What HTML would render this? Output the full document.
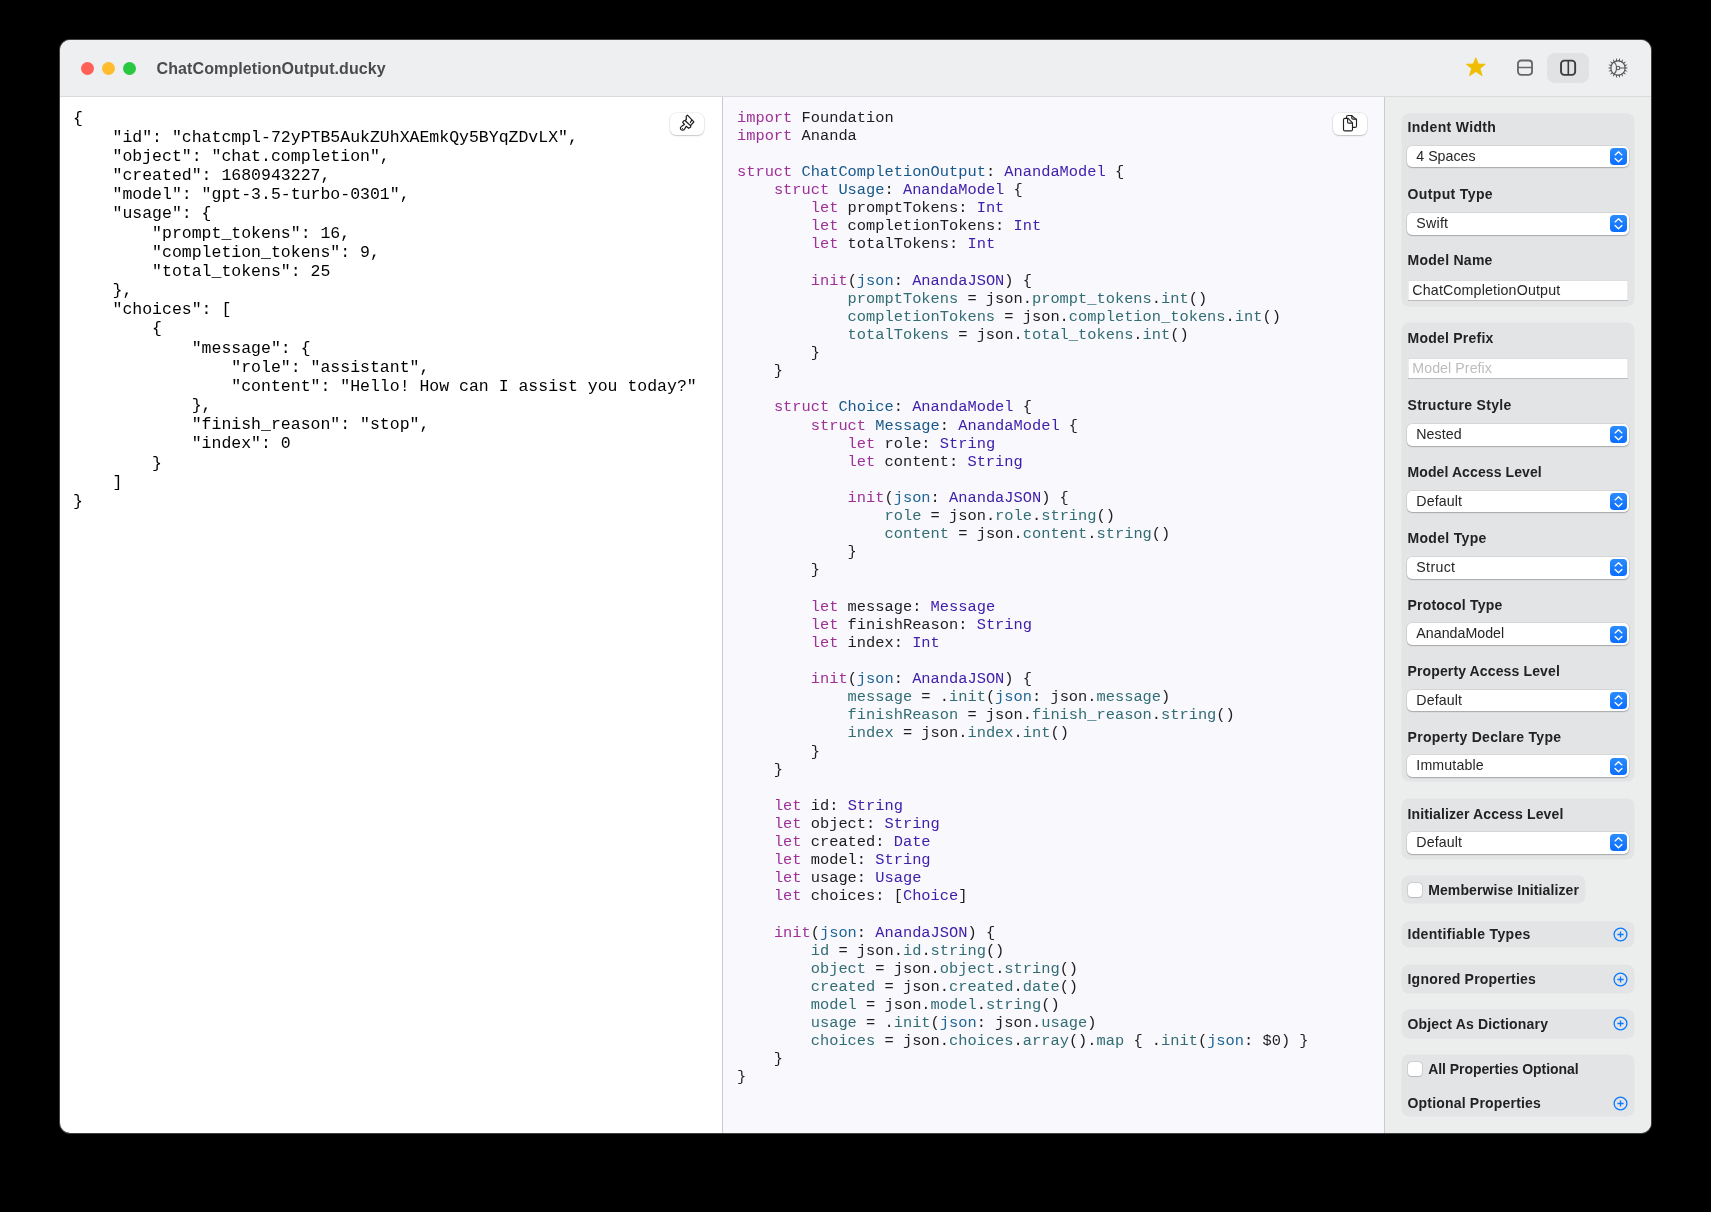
<!DOCTYPE html>
<html>
<head>
<meta charset="utf-8">
<style>
html,body{margin:0;padding:0;}
body{width:1711px;height:1212px;background:#000;position:relative;overflow:hidden;font-family:"Liberation Sans",sans-serif;}
.win{position:absolute;left:60px;top:40px;width:1591px;height:1093px;border-radius:10px;overflow:hidden;background:#fff;}
.ring{position:absolute;left:60px;top:40px;width:1591px;height:1093px;border-radius:10px;box-shadow:0 0 0 1px rgba(128,128,128,0.5);}
.pg{position:absolute;left:-60px;top:-40px;width:1711px;height:1212px;will-change:transform;}
.a{position:absolute;}
.tb{left:60px;top:40px;width:1591px;height:56px;background:#EEEFF1;border-bottom:1px solid #DADBDC;}
.dot{top:61.5px;width:13px;height:13px;border-radius:50%;}
.title{left:156.6px;top:59px;font-size:16px;font-weight:bold;color:#4B4B4B;line-height:20px;white-space:pre;letter-spacing:0.1px;}
.vdiv{top:97px;width:1px;height:1036px;background:#CBCBCD;}
.right{left:723px;top:97px;width:661px;height:1036px;background:#F8F8FD;}
.side{left:1385px;top:97px;width:266px;height:1036px;background:#ECEDED;}
pre{margin:0;font-family:"Liberation Mono",monospace;white-space:pre;}
.json{left:72.9px;top:108.5px;font-size:16.5px;line-height:19.17px;color:#000;}
.code{left:737px;top:108.7px;font-size:15.37px;line-height:18.11px;color:#1E1E1E;}
.k{color:#9E3098}.td{color:#18588A}.ty{color:#4020AA}.pr{color:#326D74}.ar{color:#1F6595}
.btn{width:34px;height:22px;border-radius:6px;background:#fff;box-shadow:0 0 0 0.5px rgba(0,0,0,0.10),0 1px 1.5px rgba(0,0,0,0.18);}
.sel{left:1547px;top:53px;width:42px;height:30px;border-radius:8px;background:#E1E2E4;}
.card{left:1402.4px;width:231px;background:#E3E4E6;border-radius:7px;box-shadow:0 0 0 0.5px rgba(0,0,0,0.04);}
.lbl{left:1408px;font-size:14px;line-height:16px;font-weight:bold;color:#222;white-space:pre;letter-spacing:0px;}
.pop{left:1407px;width:221.6px;height:21.5px;border-radius:5px;background:#fff;box-shadow:0 0 0 0.5px rgba(0,0,0,0.12),0 1px 1.2px rgba(0,0,0,0.22);}
.pop .t{position:absolute;left:9.3px;top:2px;font-size:14.2px;line-height:16px;color:#262626;white-space:pre;}
.step{position:absolute;right:1.6px;top:2.2px;width:17px;height:17px;border-radius:4px;background:linear-gradient(#2B8CFF,#0A6DFF);}
.tf{left:1408px;width:220px;height:21px;background:#fff;box-shadow:inset 0 1px 0 #DEDEDE, inset 0 -1px 0 #BDBDBD, inset 1px 0 0 #EBEBEB, inset -1px 0 0 #EBEBEB;}
.tf .t{position:absolute;left:4.3px;top:2.4px;font-size:14.2px;line-height:16px;color:#262626;white-space:pre;letter-spacing:0.19px;}
.cb{left:1407.7px;width:14px;height:14px;border-radius:3.5px;background:#fff;box-shadow:0 0 0 0.5px rgba(0,0,0,0.16),0 0.5px 1px rgba(0,0,0,0.12);}
.plus{left:1613.2px;width:15px;height:15px;}
</style>
</head>
<body>
<div class="ring"></div>
<div class="win"><div class="pg">
<div class="a tb"></div>
<div class="a dot" style="left:81px;background:#FF5F57"></div>
<div class="a dot" style="left:102px;background:#FEBC2E"></div>
<div class="a dot" style="left:123.4px;background:#28C840"></div>
<div class="a title">ChatCompletionOutput.ducky</div>
<svg class="a" style="left:1465px;top:57px" width="22" height="20" viewBox="0 0 22 20"><path d="M10.8 0.8 L13.4 7.1 L20.3 7.2 L15 11.5 L17.1 18.8 L10.8 14.6 L4.5 18.8 L6.6 11.5 L1.3 7.2 L8.2 7.1 Z" fill="#F0BE00" stroke="#F0BE00" stroke-width="0.8" stroke-linejoin="round"/></svg>
<svg class="a" style="left:1516px;top:59px" width="18" height="18" viewBox="0 0 18 18"><rect x="1.95" y="1.5" width="14.1" height="14.3" rx="3.2" fill="none" stroke="#666" stroke-width="1.8"/><path d="M2 8.5 H16" stroke="#666" stroke-width="1.5"/></svg>
<div class="a sel"></div>
<svg class="a" style="left:1559px;top:59px" width="18" height="18" viewBox="0 0 18 18"><rect x="2.05" y="1.65" width="14.1" height="14.2" rx="3.2" fill="none" stroke="#3C3C3C" stroke-width="1.9"/><path d="M9.3 2 V15.5" stroke="#3C3C3C" stroke-width="1.6"/></svg>
<svg class="a" style="left:1607px;top:57.2px" width="22" height="22" viewBox="0 0 22 22"><path d="M17.90 10.25 L20.80 10.75 L20.80 11.25 L17.90 11.75 Z M17.74 12.66 L20.29 14.12 L20.12 14.59 L17.23 14.06 Z M16.77 14.86 L18.67 17.11 L18.35 17.49 L15.80 16.01 Z M15.10 16.60 L16.12 19.36 L15.68 19.61 L13.80 17.35 Z M12.94 17.66 L12.95 20.61 L12.46 20.69 L11.46 17.93 Z M10.54 17.93 L9.54 20.69 L9.05 20.61 L9.06 17.66 Z M8.20 17.35 L6.32 19.61 L5.88 19.36 L6.90 16.60 Z M6.20 16.01 L3.65 17.49 L3.33 17.11 L5.23 14.86 Z M4.77 14.06 L1.88 14.59 L1.71 14.12 L4.26 12.66 Z M4.10 11.75 L1.20 11.25 L1.20 10.75 L4.10 10.25 Z M4.26 9.34 L1.71 7.88 L1.88 7.41 L4.77 7.94 Z M5.23 7.14 L3.33 4.89 L3.65 4.51 L6.20 5.99 Z M6.90 5.40 L5.88 2.64 L6.32 2.39 L8.20 4.65 Z M9.06 4.34 L9.05 1.39 L9.54 1.31 L10.54 4.07 Z M11.46 4.07 L12.46 1.31 L12.95 1.39 L12.94 4.34 Z M13.80 4.65 L15.68 2.39 L16.12 2.64 L15.10 5.40 Z M15.80 5.99 L18.35 4.51 L18.67 4.89 L16.77 7.14 Z M17.23 7.94 L20.12 7.41 L20.29 7.88 L17.74 9.34 Z" fill="#555"/><circle cx="11" cy="11" r="7.15" fill="none" stroke="#555" stroke-width="1.1"/><circle cx="11" cy="11" r="1.75" fill="none" stroke="#555" stroke-width="1.1"/><path d="M12.75 11 H18.1 M6.96 4.65 A8.93 8.93 0 0 1 6.96 17.35" fill="none" stroke="#555" stroke-width="1.1"/></svg>
<div class="a vdiv" style="left:722px"></div>
<div class="a right"></div>
<div class="a vdiv" style="left:1384px"></div>
<div class="a side"></div>
<pre class="a json">{
    "id": "chatcmpl-72yPTB5AukZUhXAEmkQy5BYqZDvLX",
    "object": "chat.completion",
    "created": 1680943227,
    "model": "gpt-3.5-turbo-0301",
    "usage": {
        "prompt_tokens": 16,
        "completion_tokens": 9,
        "total_tokens": 25
    },
    "choices": [
        {
            "message": {
                "role": "assistant",
                "content": "Hello! How can I assist you today?"
            },
            "finish_reason": "stop",
            "index": 0
        }
    ]
}</pre>
<pre class="a code"><span class="k">import</span> Foundation
<span class="k">import</span> Ananda

<span class="k">struct</span> <span class="td">ChatCompletionOutput</span>: <span class="ty">AnandaModel</span> {
    <span class="k">struct</span> <span class="td">Usage</span>: <span class="ty">AnandaModel</span> {
        <span class="k">let</span> promptTokens: <span class="ty">Int</span>
        <span class="k">let</span> completionTokens: <span class="ty">Int</span>
        <span class="k">let</span> totalTokens: <span class="ty">Int</span>

        <span class="k">init</span>(<span class="ar">json</span>: <span class="ty">AnandaJSON</span>) {
            <span class="pr">promptTokens</span> = json.<span class="pr">prompt_tokens</span>.<span class="pr">int</span>()
            <span class="pr">completionTokens</span> = json.<span class="pr">completion_tokens</span>.<span class="pr">int</span>()
            <span class="pr">totalTokens</span> = json.<span class="pr">total_tokens</span>.<span class="pr">int</span>()
        }
    }

    <span class="k">struct</span> <span class="td">Choice</span>: <span class="ty">AnandaModel</span> {
        <span class="k">struct</span> <span class="td">Message</span>: <span class="ty">AnandaModel</span> {
            <span class="k">let</span> role: <span class="ty">String</span>
            <span class="k">let</span> content: <span class="ty">String</span>

            <span class="k">init</span>(<span class="ar">json</span>: <span class="ty">AnandaJSON</span>) {
                <span class="pr">role</span> = json.<span class="pr">role</span>.<span class="pr">string</span>()
                <span class="pr">content</span> = json.<span class="pr">content</span>.<span class="pr">string</span>()
            }
        }

        <span class="k">let</span> message: <span class="ty">Message</span>
        <span class="k">let</span> finishReason: <span class="ty">String</span>
        <span class="k">let</span> index: <span class="ty">Int</span>

        <span class="k">init</span>(<span class="ar">json</span>: <span class="ty">AnandaJSON</span>) {
            <span class="pr">message</span> = .<span class="pr">init</span>(<span class="ar">json</span>: json.<span class="pr">message</span>)
            <span class="pr">finishReason</span> = json.<span class="pr">finish_reason</span>.<span class="pr">string</span>()
            <span class="pr">index</span> = json.<span class="pr">index</span>.<span class="pr">int</span>()
        }
    }

    <span class="k">let</span> id: <span class="ty">String</span>
    <span class="k">let</span> object: <span class="ty">String</span>
    <span class="k">let</span> created: <span class="ty">Date</span>
    <span class="k">let</span> model: <span class="ty">String</span>
    <span class="k">let</span> usage: <span class="ty">Usage</span>
    <span class="k">let</span> choices: [<span class="ty">Choice</span>]

    <span class="k">init</span>(<span class="ar">json</span>: <span class="ty">AnandaJSON</span>) {
        <span class="pr">id</span> = json.<span class="pr">id</span>.<span class="pr">string</span>()
        <span class="pr">object</span> = json.<span class="pr">object</span>.<span class="pr">string</span>()
        <span class="pr">created</span> = json.<span class="pr">created</span>.<span class="pr">date</span>()
        <span class="pr">model</span> = json.<span class="pr">model</span>.<span class="pr">string</span>()
        <span class="pr">usage</span> = .<span class="pr">init</span>(<span class="ar">json</span>: json.<span class="pr">usage</span>)
        <span class="pr">choices</span> = json.<span class="pr">choices</span>.<span class="pr">array</span>().<span class="pr">map</span> { .<span class="pr">init</span>(<span class="ar">json</span>: $0) }
    }
}</pre>
<div class="a btn" style="left:670px;top:112.5px"></div>
<svg class="a" style="left:676px;top:112px" width="24" height="22" viewBox="0 0 24 22"><g fill="none" stroke="#1a1a1a" stroke-width="1.2" stroke-linejoin="round" stroke-linecap="round"><path d="M11.44 3.18 L17.88 9.8 L14.6 13.5 L14.7 15.1 L12.7 16.3 L10.17 14.34 L8.53 17.2 C7.6 18.6 5.2 18.4 4.5 16.9 C4.1 16 4.6 15 5.45 14.52 L8.53 12.35 L6.7 10.4 L7.7 8.8 L9.08 8.53 L10.35 7.44 L10.2 4.4 Z"/><path d="M9.08 8.53 L14.16 13.43"/><path d="M15.8 8.17 L14.34 10.53"/></g><circle cx="6.45" cy="16.5" r="0.6" fill="#1a1a1a"/></svg>
<div class="a btn" style="left:1333px;top:112.5px"></div>
<svg class="a" style="left:1338px;top:112px" width="24" height="22" viewBox="0 0 24 22"><g fill="none" stroke="#222" stroke-width="1.15" stroke-linejoin="round" stroke-linecap="round"><path d="M10.17 6.35 L14.5 10.9 V17.4 Q14.5 18.9 13 18.9 H7 Q5.5 18.9 5.5 17.4 V7.85 Q5.5 6.35 7 6.35 Z"/><path d="M9.6 6.6 V9.9 Q9.6 11.1 10.8 11.1 H14.4"/><path d="M8.5 6.35 V4.95 Q8.5 3.45 10 3.45 H13.43 L18.5 7.6 V13.9 Q18.5 15.43 17 15.43 H14.5"/><path d="M13.8 3.6 V5.9 Q13.8 7.1 15 7.1 H18.3"/></g></svg>
<div class="a card" style="top:113.5px;height:192.5px;width:231.2px"></div><div class="a lbl" style="top:119.15px;left:1407.5px;letter-spacing:0.34px">Indent Width</div><div class="a pop" style="top:145.70px"><div class="t" style="letter-spacing:0.01px">4 Spaces</div><svg class="step" viewBox="0 0 17 17"><path d="M5.1 6.9 L8.5 3.7 L11.9 6.9 M5.1 10.4 L8.5 13.7 L11.9 10.4" fill="none" stroke="#fff" stroke-width="1.35" stroke-linecap="round" stroke-linejoin="round"/></svg></div><div class="a lbl" style="top:185.65px;left:1407.5px;letter-spacing:0.37px">Output Type</div><div class="a pop" style="top:213.00px"><div class="t" style="letter-spacing:0.25px">Swift</div><svg class="step" viewBox="0 0 17 17"><path d="M5.1 6.9 L8.5 3.7 L11.9 6.9 M5.1 10.4 L8.5 13.7 L11.9 10.4" fill="none" stroke="#fff" stroke-width="1.35" stroke-linecap="round" stroke-linejoin="round"/></svg></div><div class="a lbl" style="top:252.15px;left:1407.5px;letter-spacing:0.27px">Model Name</div><div class="a tf" style="top:279.50px"><div class="t">ChatCompletionOutput</div></div><div class="a card" style="top:323px;height:458px;width:231.2px"></div><div class="a lbl" style="top:330.15px;left:1407.5px;letter-spacing:0.24px">Model Prefix</div><div class="a tf" style="top:358.00px"><div class="t" style="color:#BDBDBD;letter-spacing:0.07px">Model Prefix</div></div><div class="a lbl" style="top:396.55px;left:1407.5px;letter-spacing:0.3px">Structure Style</div><div class="a pop" style="top:424.00px"><div class="t" style="letter-spacing:0.08px">Nested</div><svg class="step" viewBox="0 0 17 17"><path d="M5.1 6.9 L8.5 3.7 L11.9 6.9 M5.1 10.4 L8.5 13.7 L11.9 10.4" fill="none" stroke="#fff" stroke-width="1.35" stroke-linecap="round" stroke-linejoin="round"/></svg></div><div class="a lbl" style="top:463.65px;left:1407.5px;letter-spacing:0.1px">Model Access Level</div><div class="a pop" style="top:490.60px"><div class="t" style="letter-spacing:0.1px">Default</div><svg class="step" viewBox="0 0 17 17"><path d="M5.1 6.9 L8.5 3.7 L11.9 6.9 M5.1 10.4 L8.5 13.7 L11.9 10.4" fill="none" stroke="#fff" stroke-width="1.35" stroke-linecap="round" stroke-linejoin="round"/></svg></div><div class="a lbl" style="top:530.15px;left:1407.5px;letter-spacing:0.32px">Model Type</div><div class="a pop" style="top:557.20px"><div class="t" style="letter-spacing:0.34px">Struct</div><svg class="step" viewBox="0 0 17 17"><path d="M5.1 6.9 L8.5 3.7 L11.9 6.9 M5.1 10.4 L8.5 13.7 L11.9 10.4" fill="none" stroke="#fff" stroke-width="1.35" stroke-linecap="round" stroke-linejoin="round"/></svg></div><div class="a lbl" style="top:596.55px;left:1407.5px;letter-spacing:0.2px">Protocol Type</div><div class="a pop" style="top:623.40px"><div class="t" style="letter-spacing:0.03px">AnandaModel</div><svg class="step" viewBox="0 0 17 17"><path d="M5.1 6.9 L8.5 3.7 L11.9 6.9 M5.1 10.4 L8.5 13.7 L11.9 10.4" fill="none" stroke="#fff" stroke-width="1.35" stroke-linecap="round" stroke-linejoin="round"/></svg></div><div class="a lbl" style="top:662.75px;left:1407.5px;letter-spacing:0.13px">Property Access Level</div><div class="a pop" style="top:689.70px"><div class="t" style="letter-spacing:0.1px">Default</div><svg class="step" viewBox="0 0 17 17"><path d="M5.1 6.9 L8.5 3.7 L11.9 6.9 M5.1 10.4 L8.5 13.7 L11.9 10.4" fill="none" stroke="#fff" stroke-width="1.35" stroke-linecap="round" stroke-linejoin="round"/></svg></div><div class="a lbl" style="top:729.45px;left:1407.5px;letter-spacing:0.3px">Property Declare Type</div><div class="a pop" style="top:755.40px"><div class="t" style="letter-spacing:0.14px">Immutable</div><svg class="step" viewBox="0 0 17 17"><path d="M5.1 6.9 L8.5 3.7 L11.9 6.9 M5.1 10.4 L8.5 13.7 L11.9 10.4" fill="none" stroke="#fff" stroke-width="1.35" stroke-linecap="round" stroke-linejoin="round"/></svg></div><div class="a card" style="top:799px;height:59.5px;width:231.2px"></div><div class="a lbl" style="top:805.65px;left:1407.5px;letter-spacing:0.13px">Initializer Access Level</div><div class="a pop" style="top:832.00px"><div class="t" style="letter-spacing:0.1px">Default</div><svg class="step" viewBox="0 0 17 17"><path d="M5.1 6.9 L8.5 3.7 L11.9 6.9 M5.1 10.4 L8.5 13.7 L11.9 10.4" fill="none" stroke="#fff" stroke-width="1.35" stroke-linecap="round" stroke-linejoin="round"/></svg></div><div class="a card" style="top:876.1px;height:26.899999999999977px;width:182.7px"></div><div class="a cb" style="top:882.9px"></div><div class="a lbl" style="top:881.85px;left:1428.2px;letter-spacing:0.1px">Memberwise Initializer</div><div class="a card" style="top:921.5px;height:25.700000000000045px;width:231.2px"></div><div class="a lbl" style="top:926.15px;left:1407.5px;letter-spacing:0.33px">Identifiable Types</div><div class="a plus" style="top:926.60px"><svg width="15" height="15" viewBox="0 0 15 15"><circle cx="7.5" cy="7.5" r="6.4" fill="none" stroke="#0A7AFF" stroke-width="1.3"/><path d="M4.4 7.5 H10.6 M7.5 4.4 V10.6" stroke="#0A7AFF" stroke-width="1.3"/></svg></div><div class="a card" style="top:965.4px;height:27.200000000000045px;width:231.2px"></div><div class="a lbl" style="top:971.15px;left:1407.5px;letter-spacing:0.23px">Ignored Properties</div><div class="a plus" style="top:971.50px"><svg width="15" height="15" viewBox="0 0 15 15"><circle cx="7.5" cy="7.5" r="6.4" fill="none" stroke="#0A7AFF" stroke-width="1.3"/><path d="M4.4 7.5 H10.6 M7.5 4.4 V10.6" stroke="#0A7AFF" stroke-width="1.3"/></svg></div><div class="a card" style="top:1010px;height:27.5px;width:231.2px"></div><div class="a lbl" style="top:1015.95px;left:1407.5px;letter-spacing:0.17px">Object As Dictionary</div><div class="a plus" style="top:1016.30px"><svg width="15" height="15" viewBox="0 0 15 15"><circle cx="7.5" cy="7.5" r="6.4" fill="none" stroke="#0A7AFF" stroke-width="1.3"/><path d="M4.4 7.5 H10.6 M7.5 4.4 V10.6" stroke="#0A7AFF" stroke-width="1.3"/></svg></div><div class="a card" style="top:1055px;height:61px;width:231.2px"></div><div class="a cb" style="top:1062.3px"></div><div class="a lbl" style="top:1061.05px;left:1428.2px;letter-spacing:-0.06px">All Properties Optional</div><div class="a lbl" style="top:1095.15px;left:1407.5px;letter-spacing:0.19px">Optional Properties</div><div class="a plus" style="top:1095.50px"><svg width="15" height="15" viewBox="0 0 15 15"><circle cx="7.5" cy="7.5" r="6.4" fill="none" stroke="#0A7AFF" stroke-width="1.3"/><path d="M4.4 7.5 H10.6 M7.5 4.4 V10.6" stroke="#0A7AFF" stroke-width="1.3"/></svg></div>
</div></div>
</body>
</html>
